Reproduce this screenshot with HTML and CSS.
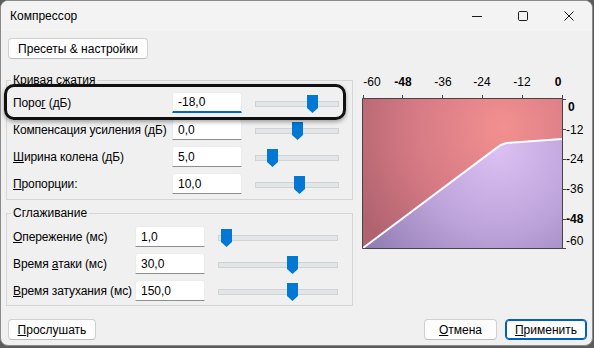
FILE: index.html
```html
<!DOCTYPE html>
<html lang="ru">
<head>
  <meta charset="UTF-8">
  <title>Компрессор</title>
  <link rel="stylesheet" href="styles.css">
</head>
<body>
  <div class="window">
    <div class="titlebar">
      <span class="title">Компрессор</span>
      <div class="caption-buttons">
        <span class="caption-btn">
          <svg width="10" height="10" viewBox="0 0 10 10"><path d="M0 5.5H10" stroke="#1a1a1a" stroke-width="1"/></svg>
        </span>
        <span class="caption-btn">
          <svg width="10" height="10" viewBox="0 0 10 10"><rect x="0.5" y="0.5" width="9" height="9" rx="1.2" fill="none" stroke="#1a1a1a" stroke-width="1"/></svg>
        </span>
        <span class="caption-btn">
          <svg width="10" height="10" viewBox="0 0 10 10"><path d="M0.5 0.5L9.5 9.5M9.5 0.5L0.5 9.5" stroke="#1a1a1a" stroke-width="1"/></svg>
        </span>
      </div>
    </div>

    <div class="toolbar">
      <button type="button" class="btn presets-btn">Пресеты &amp; настройки</button>
    </div>

    <div class="main">
      <div class="left-col">
        <fieldset class="group curve-group">
          <legend>Кривая сжатия</legend>
          <div class="rows">
            <label>Поро<u>г</u> (дБ)</label>
            <input type="text" class="field focused" value="-18,0">
            <div class="slider"><span class="thumb" style="left:52px"></span></div>

            <label>Компенсация усиления (дБ)</label>
            <input type="text" class="field" value="0,0">
            <div class="slider"><span class="thumb" style="left:37px"></span></div>

            <label><u>Ш</u>ирина колена (дБ)</label>
            <input type="text" class="field" value="5,0">
            <div class="slider"><span class="thumb" style="left:12px"></span></div>

            <label><u>П</u>ропорции:</label>
            <input type="text" class="field" value="10,0">
            <div class="slider"><span class="thumb" style="left:39px"></span></div>
          </div>
        </fieldset>

        <fieldset class="group smooth-group">
          <legend>Сглаживание</legend>
          <div class="rows">
            <label><u>О</u>пережение (мс)</label>
            <input type="text" class="field" value="1,0">
            <div class="slider"><span class="thumb" style="left:3px"></span></div>

            <label>Время <u>а</u>таки (мс)</label>
            <input type="text" class="field" value="30,0">
            <div class="slider"><span class="thumb" style="left:69px"></span></div>

            <label><u>В</u>ремя затухания (мс)</label>
            <input type="text" class="field" value="150,0">
            <div class="slider"><span class="thumb" style="left:69px"></span></div>
          </div>
        </fieldset>
      </div>

      <svg class="graph" width="234" height="185" viewBox="0 0 234 185">
        <defs>
          <radialGradient id="redFill" cx="145" cy="58" r="165" gradientUnits="userSpaceOnUse">
            <stop offset="0" stop-color="#f39090"/>
            <stop offset="0.55" stop-color="#d57a84"/>
            <stop offset="1" stop-color="#b0636f"/>
          </radialGradient>
          <radialGradient id="purpleFill" cx="140" cy="80" r="170" gradientUnits="userSpaceOnUse">
            <stop offset="0" stop-color="#dcc0f4"/>
            <stop offset="0.5" stop-color="#bba2d8"/>
            <stop offset="1" stop-color="#8c79ad"/>
          </radialGradient>
        </defs>

        <path d="M5 29H204V69L152 72.8Q146 72.5 139 77.6L5 178Z" fill="url(#redFill)"/>
        <path d="M5 178L139 77.6Q146 72.5 152 72.8L204 69V178Z" fill="url(#purpleFill)"/>
        <path d="M5 178L139 77.6Q146 72.5 152 72.8L204 69" fill="none" stroke="#fff" stroke-width="2"/>

        <g stroke="#444" stroke-width="1" fill="none">
          <path d="M4.5 28.5V178.5H204.5V25"/>
          <path d="M4.5 28.5H204.5"/>
          <path d="M5.5 25V29M44.5 25V29M84.5 25V29M124.5 25V29M164.5 25V29"/>
          <path d="M204 29.5H208M204 59.5H208M204 89.5H208M204 119.5H208M204 149.5H208M204 178.5H208"/>
        </g>

        <g class="axis-text">
          <text x="14" y="16" text-anchor="middle">-60</text>
          <text x="45" y="16" text-anchor="middle" class="bold">-48</text>
          <text x="85" y="16" text-anchor="middle">-36</text>
          <text x="124" y="16" text-anchor="middle">-24</text>
          <text x="164" y="16" text-anchor="middle">-12</text>
          <text x="200" y="16" text-anchor="middle" class="bold">0</text>

          <text x="210" y="41" class="bold">0</text>
          <text x="208" y="64">-12</text>
          <text x="208" y="93">-24</text>
          <text x="208" y="123">-36</text>
          <text x="208" y="153" class="bold">-48</text>
          <text x="208" y="175">-60</text>
        </g>
      </svg>
    </div>

    <div class="footer">
      <button type="button" class="btn preview-btn"><u>П</u>рослушать</button>
      <div class="footer-right">
        <button type="button" class="btn cancel-btn"><u>О</u>тмена</button>
        <button type="button" class="btn apply-btn default"><u>П</u>рименить</button>
      </div>
    </div>

    <div class="highlight"></div>
  </div>
</body>
</html>
```

FILE: styles.css
```css
* {
  box-sizing: border-box;
}

body {
  margin: 0;
  background: #5c5c5c;
  font-family: "Liberation Sans", Arial, sans-serif;
  font-size: 12px;
  color: #000;
}

.window {
  position: relative;
  width: 593px;
  height: 346px;
  background: #f0f0f0;
  border: 1px solid #8a8a8a;
  border-radius: 8px;
  overflow: hidden;
}

.titlebar {
  height: 30px;
  background: #f3f3f3;
  display: flex;
  align-items: center;
  justify-content: space-between;
  padding-left: 9px;
}

.title {
  font-size: 12px;
}

.caption-buttons {
  display: flex;
  height: 100%;
}

.caption-btn {
  width: 46px;
  display: flex;
  align-items: center;
  justify-content: center;
}

.toolbar {
  padding: 7px 7px 0;
}

.btn {
  font-family: inherit;
  font-size: 12px;
  height: 21px;
  padding: 0 8px;
  background: #fdfdfd;
  border: 1px solid #d0d0d0;
  border-bottom-color: #bdbdbd;
  border-radius: 4px;
  color: #000;
}

.btn u {
  text-decoration-thickness: 1px;
}

.presets-btn {
  width: 140px;
}

.main {
  display: flex;
  align-items: flex-start;
}

.left-col {
  width: 347px;
  margin-left: 5px;
}

.group {
  margin: 0;
  min-width: 0;
  border: 1px solid #d5d5d5;
  padding: 4px 0 5px 6px;
}

.group legend {
  padding: 0 2px;
  margin-left: -2px;
  line-height: 15px;
  color: #000;
}

.curve-group {
  margin-top: 14px;
}

.smooth-group {
  margin-top: 6px;
  padding-top: 5px;
  padding-bottom: 4px;
}

.rows {
  display: grid;
  align-items: center;
  row-gap: 6px;
}

.curve-group .rows {
  grid-template-columns: 159px 70px 97px;
}

.smooth-group .rows {
  grid-template-columns: 122px 70px 133px;
}

.rows label {
  white-space: nowrap;
  letter-spacing: -0.1px;
}

.field {
  font-family: inherit;
  font-size: 12px;
  height: 21px;
  width: 70px;
  padding: 0 5px;
  background: #fff;
  border: 1px solid #ececec;
  border-bottom: 1px solid #8d8d8d;
  border-radius: 3px 3px 0 0;
  color: #000;
  outline: none;
}

.field.focused {
  border-bottom: 2px solid #0067c0;
}

.slider {
  position: relative;
  height: 21px;
  margin-left: 13px;
}

.slider::before {
  content: "";
  position: absolute;
  left: 0;
  right: 0;
  top: 9px;
  height: 4px;
  background: #e3e6e6;
  border: 1px solid #cfd3d3;
}

.thumb {
  position: absolute;
  top: 3px;
  width: 11px;
  height: 18px;
  background: #0078d4;
  clip-path: polygon(0 0, 100% 0, 100% 72%, 50% 100%, 0 72%);
}

.graph {
  margin-left: 5px;
  margin-top: 11px;
}

.axis-text text {
  font-family: "Liberation Sans", Arial, sans-serif;
  font-size: 12px;
  fill: #000;
}

.axis-text .bold {
  font-weight: bold;
}

.footer {
  display: flex;
  justify-content: space-between;
  padding: 13px 5px 0 7px;
}

.footer-right {
  display: flex;
  gap: 8px;
}

.preview-btn {
  width: 88px;
}

.cancel-btn {
  width: 73px;
}

.apply-btn {
  width: 82px;
}

.btn.default {
  border: 1px solid #005fb8;
  box-shadow: inset 0 0 0 1px #005fb8;
}

.highlight {
  position: absolute;
  left: 3px;
  top: 83px;
  width: 342px;
  height: 36px;
  border: 3px solid #111;
  border-radius: 10px;
  box-shadow: 0 2px 4px rgba(0, 0, 0, 0.35);
}
```
